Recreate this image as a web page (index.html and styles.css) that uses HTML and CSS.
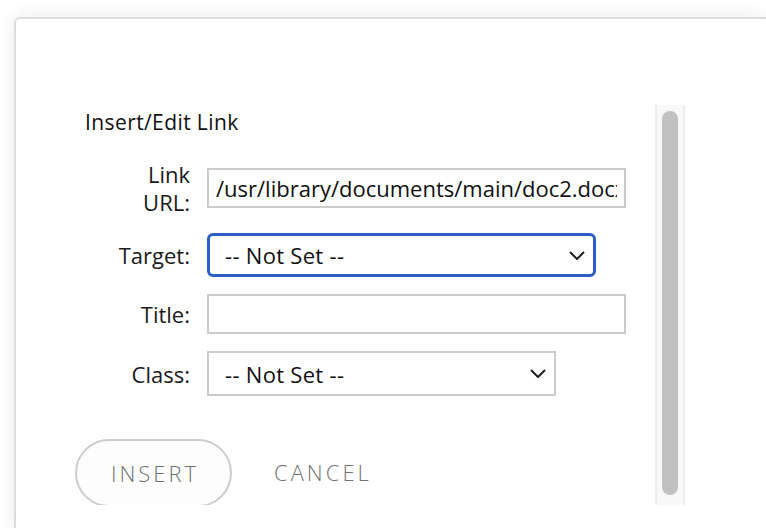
FILE: index.html
```html
<!DOCTYPE html>
<html>
<head>
<meta charset="utf-8">
<title>Insert/Edit Link</title>
<link rel="stylesheet" href="styles.css">
</head>
<body>
<div class="card">
  <div class="pane">
    <div class="content">
      <h1 class="title">Insert/Edit Link</h1>
      <div class="form">
        <label class="lbl" for="url">Link<br>URL:</label>
        <input id="url" class="field url wide" type="text" value="/usr/library/documents/main/doc2.docx" readonly>

        <label class="lbl">Target:</label>
        <div class="select focused">
          <span>-- Not Set --</span>
          <svg class="chev" width="16" height="9" viewBox="0 0 16 9"><path d="M1 1 L8 8 L15 1" fill="none" stroke="#1e1e1e" stroke-width="2"/></svg>
        </div>

        <label class="lbl" for="ttl">Title:</label>
        <input id="ttl" class="field wide" type="text" value="" readonly>

        <label class="lbl">Class:</label>
        <div class="select plain">
          <span>-- Not Set --</span>
          <svg class="chev" width="16" height="9" viewBox="0 0 16 9"><path d="M1 1 L8 8 L15 1" fill="none" stroke="#1e1e1e" stroke-width="2"/></svg>
        </div>
      </div>
      <div class="actions">
        <button class="btn-insert">INSERT</button>
        <button class="btn-cancel">CANCEL</button>
      </div>
    </div>
    <div class="scrollbar"><div class="thumb"></div></div>
  </div>
</div>
</body>
</html>
```
FILE: styles.css
```css
html, body {
  margin: 0;
  padding: 0;
  overflow: hidden;
  background: #ffffff;
  width: 766px;
  height: 528px;
}
body {
  font-family: "Open Sans", "Liberation Sans", sans-serif;
  color: #111;
}
.card {
  margin: 17px 0 0 14px;
  width: 752px;
  height: 511px;
  box-sizing: border-box;
  border: 2px solid #dcdcdc;
  border-right: none;
  border-bottom: none;
  border-radius: 6px 0 0 0;
  background: #fff;
  box-shadow: 0 0 18px rgba(0, 0, 0, 0.09);
  padding: 86px 0 0 44px;
}
.pane {
  display: flex;
  height: 400px;
}
.content {
  width: 595px;
  height: 400px;
  overflow: hidden;
}
.title {
  margin: 5px 0 26px 25px;
  font-size: 21px;
  line-height: 24px;
  font-weight: 400;
  letter-spacing: 0.4px;
  color: #111;
}
.form {
  display: grid;
  grid-template-columns: 130px auto;
  column-gap: 17px;
  row-gap: 17px;
  align-items: center;
  justify-items: start;
}
.lbl {
  justify-self: end;
  text-align: right;
  font-size: 22px;
  line-height: 28px;
  color: #1a1a1a;
}
.field {
  box-sizing: border-box;
  height: 40px;
  border: 2px solid #cccccc;
  border-radius: 0;
  padding: 0 7px;
  font-family: "Open Sans", "Liberation Sans", sans-serif;
  font-size: 22px;
  color: #111;
  background: #fff;
  outline: none;
  margin: 0;
}
.url { letter-spacing: 0; }
.wide { width: 419px; }
.select {
  box-sizing: border-box;
  display: flex;
  align-items: center;
  justify-content: space-between;
  font-size: 22px;
  letter-spacing: 0.3px;
  color: #111;
  background: #fff;
}
.select.focused {
  width: 389px;
  height: 44px;
  border: 3px solid #2b5fc6;
  border-radius: 6px;
  padding: 0 8px 0 15px;
}
.select.plain {
  width: 349px;
  height: 45px;
  border: 2px solid #cccccc;
  padding: 0 8px 0 16px;
}
.chev { display: block; }
.actions {
  display: flex;
  align-items: center;
  margin: 43px 0 0 15px;
}
.btn-insert {
  box-sizing: border-box;
  width: 157px;
  height: 68px;
  border: 2px solid #cccccc;
  border-radius: 34px;
  background: #fdfdfd;
  font-family: "Open Sans", "Liberation Sans", sans-serif;
  font-weight: 300;
  font-size: 22px;
  letter-spacing: 3px;
  color: #6f6f6f;
  padding: 0 0 0 3px;
  margin: 0;
}
.btn-cancel {
  border: none;
  background: none;
  padding: 0;
  margin: 0 0 2px 42px;
  font-family: "Open Sans", "Liberation Sans", sans-serif;
  font-weight: 300;
  font-size: 22px;
  letter-spacing: 3px;
  color: #737373;
}
.scrollbar {
  box-sizing: border-box;
  width: 30px;
  height: 400px;
  background: #f8f8f8;
  border-left: 2px solid #ececec;
  border-right: 2px solid #ececec;
  padding-top: 6px;
}
.thumb {
  width: 16px;
  height: 384px;
  margin: 0 auto;
  border-radius: 8px;
  background: #c1c1c1;
}
```
